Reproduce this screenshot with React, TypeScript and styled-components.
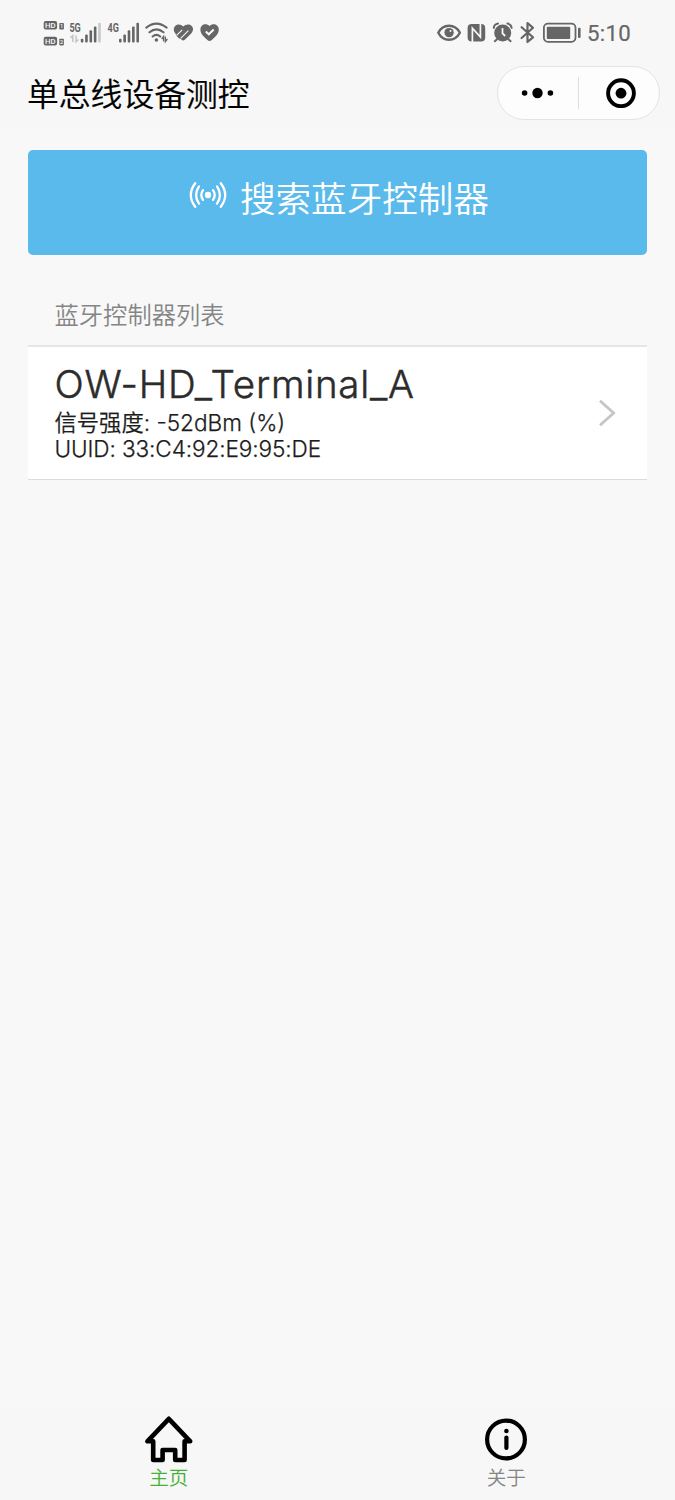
import React from "react";
import styled, { createGlobalStyle } from "styled-components";

const GlobalStyle = createGlobalStyle`
  * { box-sizing: border-box; }
  body { margin: 0; background: #f8f8f8; font-family: Inter, "Noto Sans CJK SC", sans-serif; }
`;

const Screen = styled.div`
  width: 675px;
  height: 1500px;
  display: flex;
  flex-direction: column;
  background: #f8f8f8;
  overflow: hidden;
`;

const Header = styled.header`
  height: 129px;
  background: #f7f7f7;
  flex: none;
`;

const StatusBar = styled.div`
  height: 66px;
  padding: 0 43px;
  display: flex;
  justify-content: space-between;
  color: #666;
`;

const StatusGroup = styled.div`
  display: flex;
  align-items: flex-start;
`;

const StatusIcon = styled.svg<{ $gap?: number }>`
  display: block;
  flex: none;
  margin-left: ${(p) => p.$gap ?? 0}px;
`;

const Clock = styled.span`
  width: 45px;
  margin-left: 5px;
  font: 400 22.2px/66px Roboto, sans-serif;
  letter-spacing: 0.3px;
  white-space: nowrap;
  -webkit-text-stroke: 0.2px currentColor;
`;

const TitleBar = styled.div`
  height: 54px;
  padding: 0 15px 0 27px;
  display: flex;
  align-items: center;
  justify-content: space-between;
`;

const Title = styled.h1`
  margin: 0;
  padding-bottom: 1px;
  font: 350 31.8px/51px "Noto Sans CJK SC", sans-serif;
  color: #000;
  -webkit-text-stroke: 0.2px currentColor;
`;

const Capsule = styled.div`
  width: 163px;
  height: 54px;
  border: 1px solid #e3e3e3;
  border-radius: 27px;
  background: #fdfdfd;
  display: flex;
  align-items: center;
`;

const CapsuleButton = styled.button<{ $width: number; $shift?: number }>`
  width: ${(p) => p.$width}px;
  height: 100%;
  padding: 0 0 0 ${(p) => p.$shift ?? 0}px;
  border: 0;
  background: none;
  display: flex;
  flex: none;
  align-items: center;
  justify-content: center;
`;

const CapsuleDivider = styled.span`
  width: 1px;
  height: 32px;
  background: #dedede;
`;

const Main = styled.main`
  flex: 1;
  padding: 21px 28px 0;
`;

const SearchButton = styled.button`
  width: 619px;
  height: 105px;
  padding: 0 0 12px 3px;
  border: 0;
  border-radius: 5px;
  background: #5abaec;
  color: #fff;
  display: flex;
  align-items: center;
  justify-content: center;
  gap: 13px;
  font: 350 35.6px/52px "Noto Sans CJK SC", sans-serif;

  svg {
    margin-bottom: 3px;
  }
`;

const SectionTitle = styled.h2`
  margin: 41px 0 0 26.5px;
  height: 49px;
  font: 350 24.3px/36px "Noto Sans CJK SC", sans-serif;
  color: #858585;
`;

const DeviceRow = styled.div`
  height: 135px;
  padding: 0 31px 0 26.5px;
  border-top: 2px solid #e6e6e6;
  border-bottom: 1px solid #dcdcdc;
  background: #fff;
  display: flex;
  align-items: center;
  justify-content: space-between;
`;

const DeviceInfo = styled.div`
  height: 100%;
  padding-top: 13px;
`;

const DeviceName = styled.div`
  font-weight: 300;
  font-size: 38.5px;
  line-height: 48px;
  letter-spacing: 0.75px;
  color: #2c2c2c;
  white-space: nowrap;
  -webkit-text-stroke: 0.5px currentColor;
`;

const DeviceDetail = styled.div<{ $spacing: number }>`
  font-weight: 300;
  font-size: 22.6px;
  line-height: 27px;
  height: 27px;
  letter-spacing: ${(p) => p.$spacing}px;
  color: #1c1c1c;
  white-space: nowrap;
  -webkit-text-stroke: 0.25px currentColor;
`;

const DetailLabel = styled.span`
  font: 350 22.3px/27px "Noto Sans CJK SC", sans-serif;
  letter-spacing: 0;
`;

const TabBar = styled.nav`
  height: 92px;
  background: #f7f7f7;
  display: flex;
  flex: none;
`;

const Tab = styled.a<{ $active?: boolean }>`
  flex: 1;
  padding-top: 6px;
  display: flex;
  flex-direction: column;
  align-items: center;
  font: 350 19.6px/25px "Noto Sans CJK SC", sans-serif;
  color: ${(p) => (p.$active ? "#45b035" : "#858585")};
`;

/* Status icons share the bar's coordinate system, so each viewBox is a slice of it. */
const Slice = ({ x, w, gap, children }: { x: number; w: number; gap?: number; children: React.ReactNode }) => (
  <StatusIcon $gap={gap} width={w} height={66} viewBox={`${x} 0 ${w} 66`} fill="#666">
    {children}
  </StatusIcon>
);

const HdBadge = ({ y, sim }: { y: number; sim: string }) => (
  <>
    <rect x="43.7" y={y} width="13.4" height="8.6" rx="2" />
    <text x="50.4" y={y + 7.1} fontFamily="Roboto" fontSize="7.8" fontWeight="500" textAnchor="middle" fill="#f7f7f7" textLength="10.6" lengthAdjust="spacingAndGlyphs">HD</text>
    <rect x="59.3" y={y + 2} width="4.6" height="6.6" rx="0.8" />
    <text x="61.6" y={y + 7.3} fontFamily="Roboto" fontSize="5.6" fontWeight="500" textAnchor="middle" fill="#f7f7f7">{sim}</text>
  </>
);

const Signal = ({ x, label, dimLast }: { x: number; label: string; dimLast?: boolean }) => (
  <>
    <text x={x - 11.4} y="32" fontFamily="Roboto" fontSize="12.2" fontWeight="700" textLength="11.4" lengthAdjust="spacingAndGlyphs">{label}</text>
    {[38.7, 34.4, 30.2, 26.4, 22.8].map((top, i) => (
      <rect key={i} x={x + i * 4.35} y={top} width="2.6" height={42.4 - top} rx="1" fill={dimLast && i === 4 ? "#c8c8c8" : "#666"} />
    ))}
  </>
);

const BroadcastIcon = () => (
  <svg width="38" height="28" viewBox="0 0 38 28" fill="none" stroke="#fff" strokeWidth="2.3" strokeLinecap="round">
    <circle cx="19" cy="14" r="3.2" fill="#fff" stroke="none" />
    <path d="M14 9.2Q10.6 14 14 18.8M10 5.4Q4.2 14 10 22.6M6.2 2.2Q-2.6 14 6.2 25.8M24 9.2Q27.4 14 24 18.8M28 5.4Q33.8 14 28 22.6M31.8 2.2Q40.6 14 31.8 25.8" />
  </svg>
);

export default function App() {
  return (
    <>
      <GlobalStyle />
      <Screen>
        <Header>
          <StatusBar>
            <StatusGroup>
              <Slice x={43} w={22}>
                <HdBadge y={21} sim="1" />
                <HdBadge y={36.8} sim="2" />
              </Slice>
              <Slice x={69} w={33} gap={4}>
                <Signal x={80.8} label="5G" dimLast />
                <path d="M72.8 42V35.5L70.4 38M76 35.5V42L78.4 39.5" fill="none" stroke="#c4c4c4" strokeWidth="1.5" />
              </Slice>
              <Slice x={107} w={33} gap={5}>
                <Signal x={119} label="4G" />
              </Slice>
              <Slice x={145} w={24} gap={5}>
                <path d="M146.3 27.6Q156.4 19.6 166.6 27.6M149.5 32.3Q156.4 26.5 163.5 32.3M152.6 36.5Q156.4 33.2 160.2 36.5" fill="none" stroke="#666" strokeWidth="2.1" strokeLinecap="round" />
                <circle cx="156.4" cy="40" r="1.8" />
                <path d="M163.6 41.6V36.5L161.7 39M165.4 36.5V41.6L167.4 39" fill="none" stroke="#666" strokeWidth="1.3" />
              </Slice>
              <Slice x={173} w={21} gap={4}>
                <path d="M174.8 32.8C172.4 29.2 174.6 24.4 178.6 24.4C180.6 24.4 182 25.2 183.2 26.6C186.8 22.6 193.2 24.4 193 29.2C193 31.4 191.8 32.8 190.4 34.2L185 39.6C184 40.8 182.6 40.8 181.8 39.8L180.6 38.8Q178.6 38.8 178 37.2Q176.4 36.6 176.2 34.8Z" />
                <path d="M176.6 35.4L182.2 29.8M180.6 38.4L188.4 30.6" stroke="#f7f7f7" strokeWidth="1.1" fill="none" />
              </Slice>
              <Slice x={200} w={20} gap={6}>
                <path d="M207.4 40C204.8 37.6 200.4 34.6 200.4 29.6C200.4 24.2 206.3 22.6 209.5 26C212.7 22.6 218.8 24.2 218.8 29.6C218.8 34.6 214.4 37.6 211.8 40Q209.6 41.8 207.4 40Z" />
                <path d="M205.8 31.5L208.8 34.3L213.7 29.5" fill="none" stroke="#f7f7f7" strokeWidth="2" />
              </Slice>
            </StatusGroup>
            <StatusGroup>
              <Slice x={437} w={24}>
                <path d="M438.3 32.7C443 23.4 455 23.4 459.9 32.7C455 42 443 42 438.3 32.7Z" fill="none" stroke="#666" strokeWidth="2.4" />
                <circle cx="449.1" cy="32.6" r="4.7" />
                <circle cx="450.5" cy="31.1" r="1" fill="#f7f7f7" />
              </Slice>
              <Slice x={467} w={19} gap={6}>
                <rect x="467.6" y="24" width="17.6" height="17.4" rx="4" />
                <path d="M472.4 42V28.2L480.4 37V23.5" fill="none" stroke="#f7f7f7" strokeWidth="1.7" />
              </Slice>
              <Slice x={492} w={22} gap={6}>
                <circle cx="502.7" cy="33" r="8.5" />
                <path d="M502.5 28V33.3L505.2 36" fill="none" stroke="#f7f7f7" strokeWidth="1.8" />
                <path d="M493.8 27.8Q494.2 24.3 498 23.6M507.4 23.6Q511.2 24.3 511.6 27.8M497 39.2L494.8 41.2M508.4 39.2L510.6 41.2" fill="none" stroke="#666" strokeWidth="2" strokeLinecap="round" />
              </Slice>
              <Slice x={520} w={16} gap={6}>
                <path d="M521.6 27.2L533 37.3L527.5 42V23L533 27.8L521.6 38" fill="none" stroke="#666" strokeWidth="2.2" strokeLinejoin="round" strokeLinecap="round" />
              </Slice>
              <Slice x={543} w={39} gap={7}>
                <rect x="543.9" y="23.6" width="31.6" height="18.2" rx="4" fill="none" stroke="#666" strokeWidth="1.8" />
                <rect x="546.8" y="26.7" width="23.4" height="12.2" rx="1" />
                <rect x="578" y="27.7" width="2.6" height="10.2" rx="1" />
              </Slice>
              <Clock>5:10</Clock>
            </StatusGroup>
          </StatusBar>
          <TitleBar>
            <Title>单总线设备测控</Title>
            <Capsule>
              <CapsuleButton $width={80} aria-label="更多">
                <svg width="34" height="12" viewBox="0 0 34 12">
                  <circle cx="3.6" cy="6" r="2.8" />
                  <circle cx="16.5" cy="6" r="5.2" />
                  <circle cx="29.4" cy="6" r="2.8" />
                </svg>
              </CapsuleButton>
              <CapsuleDivider />
              <CapsuleButton $width={80} $shift={3} aria-label="关闭">
                <svg width="30" height="30" viewBox="0 0 30 30">
                  <circle cx="15" cy="15.2" r="12.9" fill="none" stroke="#000" strokeWidth="3.9" />
                  <circle cx="15" cy="15.2" r="5.4" />
                </svg>
              </CapsuleButton>
            </Capsule>
          </TitleBar>
        </Header>
        <Main>
          <SearchButton>
            <BroadcastIcon />
            <span>搜索蓝牙控制器</span>
          </SearchButton>
          <SectionTitle>蓝牙控制器列表</SectionTitle>
          <DeviceRow>
            <DeviceInfo>
              <DeviceName>OW-HD_Terminal_A</DeviceName>
              <DeviceDetail $spacing={0}>
                <DetailLabel>信号强度</DetailLabel>: -52dBm (%)
              </DeviceDetail>
              <DeviceDetail $spacing={-0.12}>UUID: 33:C4:92:E9:95:DE</DeviceDetail>
            </DeviceInfo>
            <svg width="18" height="28" viewBox="0 0 18 28" fill="none" stroke="#c5c5c5" strokeWidth="2.8">
              <path d="M2 1.8L15.6 14L2 26.2" />
            </svg>
          </DeviceRow>
        </Main>
        <TabBar>
          <Tab $active>
            <svg width="50" height="50" viewBox="0 0 50 50" fill="none" stroke="#000" strokeWidth="4.6" strokeLinejoin="round" strokeLinecap="round">
              <path d="M24.8 4.8L3.4 27.3H9.2V46H18.6V36H31.2V46H40.6V27.3H46.2Z" />
            </svg>
            主页
          </Tab>
          <Tab>
            <svg width="50" height="50" viewBox="0 0 50 50">
              <circle cx="25" cy="25.5" r="18.9" fill="none" stroke="#000" strokeWidth="4.2" />
              <circle cx="25.4" cy="17" r="2.3" />
              <path d="M25.4 23.5V34" stroke="#000" strokeWidth="4.2" strokeLinecap="round" />
            </svg>
            关于
          </Tab>
        </TabBar>
      </Screen>
    </>
  );
}
